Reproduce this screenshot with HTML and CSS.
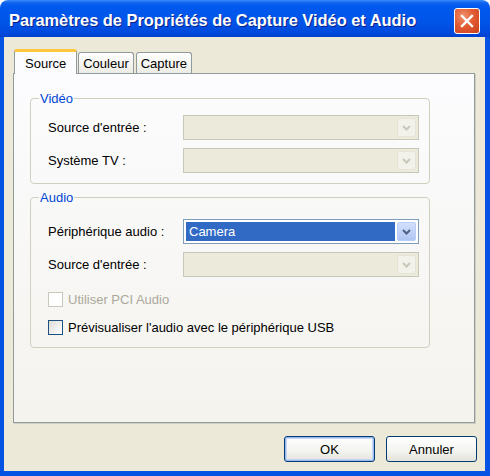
FILE: index.html
```html
<!DOCTYPE html>
<html lang="fr">
<head>
    <meta charset="UTF-8">
    <title>Paramètres de Propriétés de Capture Vidéo et Audio</title>
    <link rel="stylesheet" href="styles.css">
</head>
<body>
    <div class="window">
        <div class="titlebar">
            <span class="title">Paramètres de Propriétés de Capture Vidéo et Audio</span>
            <span class="close-btn">
                <svg width="14" height="14" viewBox="0 0 14 14"><path d="M2 2 L12 12 M12 2 L2 12" stroke="#fff" stroke-width="2.4" stroke-linecap="square"/></svg>
            </span>
        </div>

        <div class="client">
            <div class="tabs">
                <span class="tab active">Source</span>
                <span class="tab">Couleur</span>
                <span class="tab">Capture</span>
            </div>

            <div class="panel">
                <!-- Vidéo -->
                <fieldset class="group group-video">
                    <legend>Vidéo</legend>
                    <div class="form-grid">
                        <label>Source d'entrée :</label>
                        <div class="combo disabled">
                            <span class="combo-text"></span>
                            <span class="combo-btn"><svg width="9" height="6" viewBox="0 0 9 6"><path d="M1 1 L4.5 4.5 L8 1" fill="none" stroke-width="2"/></svg></span>
                        </div>
                        <label>Système TV :</label>
                        <div class="combo disabled">
                            <span class="combo-text"></span>
                            <span class="combo-btn"><svg width="9" height="6" viewBox="0 0 9 6"><path d="M1 1 L4.5 4.5 L8 1" fill="none" stroke-width="2"/></svg></span>
                        </div>
                    </div>
                </fieldset>

                <!-- Audio -->
                <fieldset class="group group-audio">
                    <legend>Audio</legend>
                    <div class="form-grid">
                        <label>Périphérique audio :</label>
                        <div class="combo">
                            <span class="combo-text selected">Camera</span>
                            <span class="combo-btn"><svg width="9" height="6" viewBox="0 0 9 6"><path d="M1 1 L4.5 4.5 L8 1" fill="none" stroke-width="2"/></svg></span>
                        </div>
                        <label>Source d'entrée :</label>
                        <div class="combo disabled">
                            <span class="combo-text"></span>
                            <span class="combo-btn"><svg width="9" height="6" viewBox="0 0 9 6"><path d="M1 1 L4.5 4.5 L8 1" fill="none" stroke-width="2"/></svg></span>
                        </div>
                    </div>
                    <div class="check-row disabled">
                        <span class="checkbox"></span>
                        <span>Utiliser PCI Audio</span>
                    </div>
                    <div class="check-row">
                        <span class="checkbox"></span>
                        <span>Prévisualiser l'audio avec le périphérique USB</span>
                    </div>
                </fieldset>
            </div>

            <div class="buttons">
                <button class="btn default">OK</button>
                <button class="btn">Annuler</button>
            </div>
        </div>
    </div>
</body>
</html>
```

FILE: styles.css
```css
* { margin: 0; padding: 0; box-sizing: border-box; }
body {
    background: #fff;
    font-family: 'Liberation Sans', Arial, sans-serif;
    font-size: 13px;
    color: #000;
}
.window {
    width: 490px;
    height: 476px;
    display: flex;
    flex-direction: column;
}
.titlebar {
    height: 37px;
    flex-shrink: 0;
    display: flex;
    align-items: center;
    justify-content: space-between;
    padding: 4px 9px 0 9px;
    border-radius: 8px 8px 0 0;
    background: linear-gradient(#3a8cf8 0, #0d62ef 3px, #0058ee 7px, #0055e8 60%, #0049dc 90%, #003fcb 100%);
}
.title {
    color: #fff;
    font-family: 'Liberation Sans', Arial, sans-serif;
    font-weight: 700;
    font-size: 16.4px;
    text-shadow: 1px 1px 0 #0a1e8a;
}
.close-btn {
    width: 26px;
    height: 26px;
    display: flex;
    align-items: center;
    justify-content: center;
    border: 1px solid #fff;
    border-radius: 3px;
    background: radial-gradient(circle at 35% 30%, #f0916c 0, #e25b32 45%, #c8401c 100%);
    margin-right: 1px;
}
.client {
    flex: 1;
    display: flex;
    flex-direction: column;
    background: #ece9d8;
    border: solid #0553e2;
    border-width: 0 5px 5px 4px;
    padding: 12px 10px 0 9px;
}
.tabs {
    display: flex;
    align-items: flex-end;
    height: 24px;
    padding-left: 1px;
    position: relative;
    z-index: 1;
}
.tab {
    height: 21px;
    padding: 0 4px;
    display: flex;
    align-items: center;
    border: 1px solid #919b9c;
    border-bottom: none;
    border-radius: 3px 3px 0 0;
    background: linear-gradient(#fff, #ecebe5);
    margin-right: 2px;
}
.tab.active {
    height: 25px;
    padding: 0 10px;
    margin-right: 1px;
    margin-bottom: -1px;
    border-top: 3px solid #ffc83c;
    background: #fcfcfe;
}
.panel {
    height: 350px;
    border: 1px solid #919b9c;
    box-shadow: 1px 1px 0 #d0cfc3;
    background: linear-gradient(#fcfcfe, #f4f3ee);
    padding: 17px 0 0 16px;
}
.group {
    width: 400px;
    border: 1px solid #d0d0bf;
    border-radius: 4px;
}
.group legend {
    color: #0046d5;
    margin-left: -9px;
    padding: 0 1px;
    line-height: 15px;
}
.group-video {
    padding: 9px 10px 10px 17px;
}
.group-audio {
    margin-top: 6px;
    padding: 14px 10px 12px 17px;
}
.form-grid {
    display: grid;
    grid-template-columns: 135px 236px;
    row-gap: 8px;
    align-items: center;
}
.combo {
    height: 25px;
    display: flex;
    border: 1px solid #7f9db9;
    background: #fff;
    padding: 2px;
}
.combo-text {
    flex: 1;
    display: flex;
    align-items: center;
    padding-left: 3px;
}
.combo-text.selected {
    background: #316ac5;
    color: #fff;
    margin-right: 2px;
}
.combo-btn {
    width: 19px;
    display: flex;
    align-items: center;
    justify-content: center;
    border: 1px solid #b9cdf7;
    border-radius: 2px;
    background: linear-gradient(#d2e0fd, #b1c6f5);
}
.combo-btn svg { stroke: #4d6185; }
.combo.disabled {
    border-color: #c9c7ba;
    background: #ebeadb;
}
.combo.disabled .combo-btn {
    border-color: #e6e4d8;
    background: #f3f2ea;
}
.combo.disabled .combo-btn svg { stroke: #c9c7ba; }
.check-row {
    display: flex;
    align-items: center;
    gap: 5px;
    margin-top: 15px;
}
.check-row + .check-row { margin-top: 13px; }
.checkbox {
    width: 15px;
    height: 15px;
    border: 1px solid #1c5180;
    background: linear-gradient(135deg, #dcdcd7, #fff);
}
.check-row.disabled { color: #aca899; }
.check-row.disabled .checkbox {
    border-color: #cac8bb;
    background: #fff;
}
.buttons {
    display: flex;
    justify-content: flex-end;
    gap: 11px;
    margin-top: 13px;
    margin-right: -2px;
}
.btn {
    width: 91px;
    height: 26px;
    font-family: 'Liberation Sans', Arial, sans-serif;
    font-size: 13px;
    color: #000;
    border: 1px solid #003c74;
    border-radius: 3px;
    background: linear-gradient(#fff, #f3f3ef 60%, #e3e2da);
}
.btn.default {
    box-shadow: inset 0 0 0 1px #98b8ef, inset 0 0 0 2px #c6d7f6;
}
```
